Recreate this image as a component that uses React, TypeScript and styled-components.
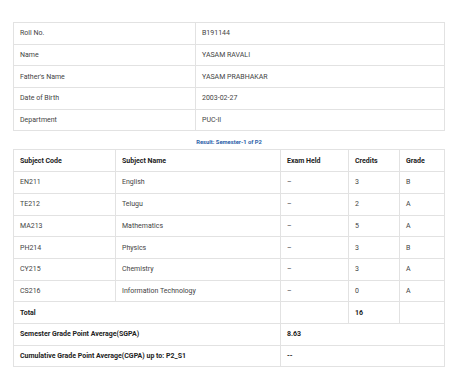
import styled, { createGlobalStyle } from "styled-components";

const GlobalStyle = createGlobalStyle`
  html, body {
    margin: 0;
    padding: 0;
    background: #fff;
    font-family: Roboto, "Liberation Sans", Arial, sans-serif;
  }
`;

const details = [
  ["Roll No.", "B191144"],
  ["Name", "YASAM RAVALI"],
  ["Father's Name", "YASAM PRABHAKAR"],
  ["Date of Birth", "2003-02-27"],
  ["Department", "PUC-II"],
];

const subjects = [
  { code: "EN211", name: "English", held: "–", credits: "3", grade: "B" },
  { code: "TE212", name: "Telugu", held: "–", credits: "2", grade: "A" },
  { code: "MA213", name: "Mathematics", held: "–", credits: "5", grade: "A" },
  { code: "PH214", name: "Physics", held: "–", credits: "3", grade: "B" },
  { code: "CY215", name: "Chemistry", held: "–", credits: "3", grade: "A" },
  { code: "CS216", name: "Information Technology", held: "–", credits: "0", grade: "A" },
];

export default function App() {
  return (
    <Page>
      <GlobalStyle />
      <Table>
        <colgroup>
          <col style={{ width: 182 }} />
          <col />
        </colgroup>
        <tbody>
          {details.map(([label, value]) => (
            <tr key={label}>
              <Cell>{label}</Cell>
              <Cell>{value}</Cell>
            </tr>
          ))}
        </tbody>
      </Table>
      <Heading>Result: Semester-1 of P2</Heading>
      <Table>
        <colgroup>
          <col style={{ width: 102 }} />
          <col style={{ width: 165 }} />
          <col style={{ width: 68 }} />
          <col style={{ width: 51 }} />
          <col />
        </colgroup>
        <thead>
          <tr>
            <Cell bold>Subject Code</Cell>
            <Cell bold>Subject Name</Cell>
            <Cell bold>Exam Held</Cell>
            <Cell bold>Credits</Cell>
            <Cell bold>Grade</Cell>
          </tr>
        </thead>
        <tbody>
          {subjects.map(s => (
            <tr key={s.code}>
              <Cell>{s.code}</Cell>
              <Cell>{s.name}</Cell>
              <Cell>{s.held}</Cell>
              <Cell>{s.credits}</Cell>
              <Cell>{s.grade}</Cell>
            </tr>
          ))}
          <tr>
            <Cell bold colSpan={2}>Total</Cell>
            <Cell />
            <Cell bold>16</Cell>
            <Cell />
          </tr>
          <tr>
            <Cell bold colSpan={2}>Semester Grade Point Average(SGPA)</Cell>
            <Cell bold colSpan={3}>8.63</Cell>
          </tr>
          <tr>
            <Cell bold colSpan={2}>Cumulative Grade Point Average(CGPA) up to: P2_S1</Cell>
            <Cell bold colSpan={3}>--</Cell>
          </tr>
        </tbody>
      </Table>
    </Page>
  );
}

const Page = styled.div`
  width: 432px;
  padding: 22px 24px 12px 13px;
`;

const Table = styled.table`
  width: 432px;
  border-collapse: collapse;
  table-layout: fixed;
  border: 1px solid #e2e2e2;
`;

const Cell = styled.td<{ bold?: boolean }>`
  height: 21.7px;
  box-sizing: border-box;
  padding: 0 6px;
  border: 1px solid #e2e2e2;
  font-size: 7px;
  font-weight: ${p => (p.bold ? 700 : 400)};
  color: ${p => (p.bold ? "#222" : "#444")};
  text-align: left;
  vertical-align: middle;
  white-space: nowrap;
`;

const Heading = styled.div`
  height: 18px;
  display: flex;
  align-items: center;
  justify-content: center;
  padding-top: 4px;
  box-sizing: border-box;
  font-size: 5.8px;
  font-weight: 700;
  color: #2b5ea8;
`;
